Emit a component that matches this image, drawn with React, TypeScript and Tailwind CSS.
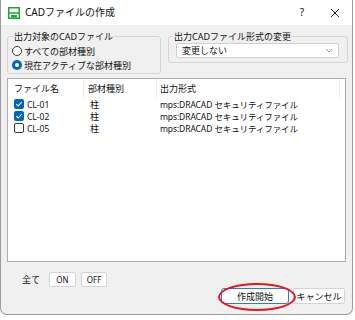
import React from 'react'

const rows = [
    { name: 'CL-01', kind: '柱', format: 'mps:DRACAD セキュリティファイル', checked: true },
    { name: 'CL-02', kind: '柱', format: 'mps:DRACAD セキュリティファイル', checked: true },
    { name: 'CL-05', kind: '柱', format: 'mps:DRACAD セキュリティファイル', checked: false },
]

function Radio({ selected, label }: { selected?: boolean; label: string }) {
    return (
        <div className="flex items-center h-[12px] pl-[4px] gap-[2px]">
            {selected ? (
                <span className="w-[10px] h-[10px] rounded-full bg-[#0067c0] flex items-center justify-center">
                    <span className="w-[4px] h-[4px] rounded-full bg-white" />
                </span>
            ) : (
                <span className="w-[10px] h-[10px] rounded-full border border-[#3a3a3a] bg-white" />
            )}
            <span>{label}</span>
        </div>
    )
}

function Check({ checked }: { checked: boolean }) {
    return checked ? (
        <span className="w-[10px] h-[10px] rounded-[2px] bg-[#0067c0] flex items-center justify-center">
            <svg width="8" height="8" viewBox="0 0 8 8">
                <path d="M1.3 4.2 L3.2 6 L6.8 2" fill="none" stroke="white" strokeWidth="1.1" />
            </svg>
        </span>
    ) : (
        <span className="w-[10px] h-[10px] rounded-[2px] border border-[#3a3a3a] bg-white" />
    )
}

export default function App() {
    return (
        <div className="w-[355px] h-[320px] bg-white text-[9px] leading-[11px] text-[#111] font-['Noto_Sans','Noto_Sans_CJK_JP',sans-serif]">
            <div className="relative w-[353px] h-[315px] border border-t-0 border-[#9c9c9c] rounded-b-[7px] bg-[#f0f0f0] flex flex-col overflow-hidden">
                {/* Title bar */}
                <div className="h-[25px] bg-white flex items-center pl-[7px] pr-[12px] shrink-0">
                    <svg width="12" height="12" viewBox="0 0 12 12" className="mr-[5px]">
                        <rect x="0.75" y="0.75" width="10.5" height="10.5" fill="none" stroke="#1fa43a" strokeWidth="1.5" />
                        <line x1="0.75" y1="6" x2="11.25" y2="6" stroke="#1fa43a" strokeWidth="1.5" />
                        <rect x="3" y="8" width="6" height="2.5" fill="#1fa43a" />
                    </svg>
                    <span className="text-[10px]">CADファイルの作成</span>
                    <span className="ml-auto text-[10px] mr-[26px]">?</span>
                    <svg width="10" height="10" viewBox="0 0 10 10">
                        <path d="M1 1 L9 9 M9 1 L1 9" stroke="#222" strokeWidth="1" />
                    </svg>
                </div>

                {/* Group boxes */}
                <div className="flex items-start gap-[7px] pl-[6px] mt-[6px]">
                    <fieldset className="w-[154px] h-[43px] border border-[#d5d5d5] rounded-[3px]">
                        <legend className="ml-[5px] px-[1px]">出力対象のCADファイル</legend>
                        <div className="flex flex-col gap-[2px] mt-[3px]">
                            <Radio label="すべての部材種別" />
                            <Radio selected label="現在アクティブな部材種別" />
                        </div>
                    </fieldset>
                    <fieldset className="w-[180px] h-[32px] border border-[#d5d5d5] rounded-[3px]">
                        <legend className="ml-[4px] px-[1px]">出力CADファイル形式の変更</legend>
                        <div className="ml-[7px] mt-[1px] w-[163px] h-[15px] bg-white border border-[#d0d0d0] rounded-[2px] flex items-center pl-[5px] pr-[5px]">
                            <span>変更しない</span>
                            <svg width="8" height="5" viewBox="0 0 8 5" className="ml-auto">
                                <path d="M1 1 L4 4 L7 1" fill="none" stroke="#888" strokeWidth="0.9" />
                            </svg>
                        </div>
                    </fieldset>
                </div>

                {/* List */}
                <div className="ml-[6px] mt-[4px] w-[339px] h-[184px] bg-white border border-[#adadad] shrink-0">
                    <div className="flex h-[19px] items-center">
                        <div className="w-[76px] h-full pl-[6px] flex items-center border-r border-[#ececec]">ファイル名</div>
                        <div className="w-[73px] h-full pl-[4px] flex items-center border-r border-[#ececec]">部材種別</div>
                        <div className="w-[183px] h-full pl-[3px] flex items-center border-r border-[#ececec]">出力形式</div>
                    </div>
                    {rows.map((r) => (
                        <div key={r.name} className="flex h-[12px] items-center">
                            <div className="w-[76px] pl-[6px] flex items-center gap-[3px]">
                                <Check checked={r.checked} />
                                <span className="text-[8.5px]">{r.name}</span>
                            </div>
                            <div className="w-[73px] pl-[6px]">{r.kind}</div>
                            <div className="pl-[3px] text-[8.5px] tracking-[-0.1px]">{r.format}</div>
                        </div>
                    ))}
                </div>

                {/* All on/off */}
                <div className="flex items-center mt-[10px] pl-[21px] h-[15px]">
                    <span className="mr-[9px]">全て</span>
                    <button className="w-[27px] h-[15px] bg-white border border-[#d4d4d4] rounded-[2px] text-[8px] mr-[5px]">ON</button>
                    <button className="w-[26px] h-[15px] bg-white border border-[#d4d4d4] rounded-[2px] text-[8px]">OFF</button>
                </div>

                {/* Action buttons */}
                <div className="flex justify-end gap-[4px] pr-[7px] mt-[1px]">
                    <button className="w-[68px] h-[16px] bg-white border-[1.5px] border-[#2f7bd0] rounded-[3px] text-[9px]">作成開始</button>
                    <button className="w-[52px] h-[16px] bg-white border border-[#d4d4d4] rounded-[2px] text-[9px]">キャンセル</button>
                </div>

                {/* Annotation */}
                <div className="absolute left-[217px] top-[283px] w-[78px] h-[28px] rounded-[50%] border-2 border-[#e5171b]" />
            </div>
        </div>
    )
}
